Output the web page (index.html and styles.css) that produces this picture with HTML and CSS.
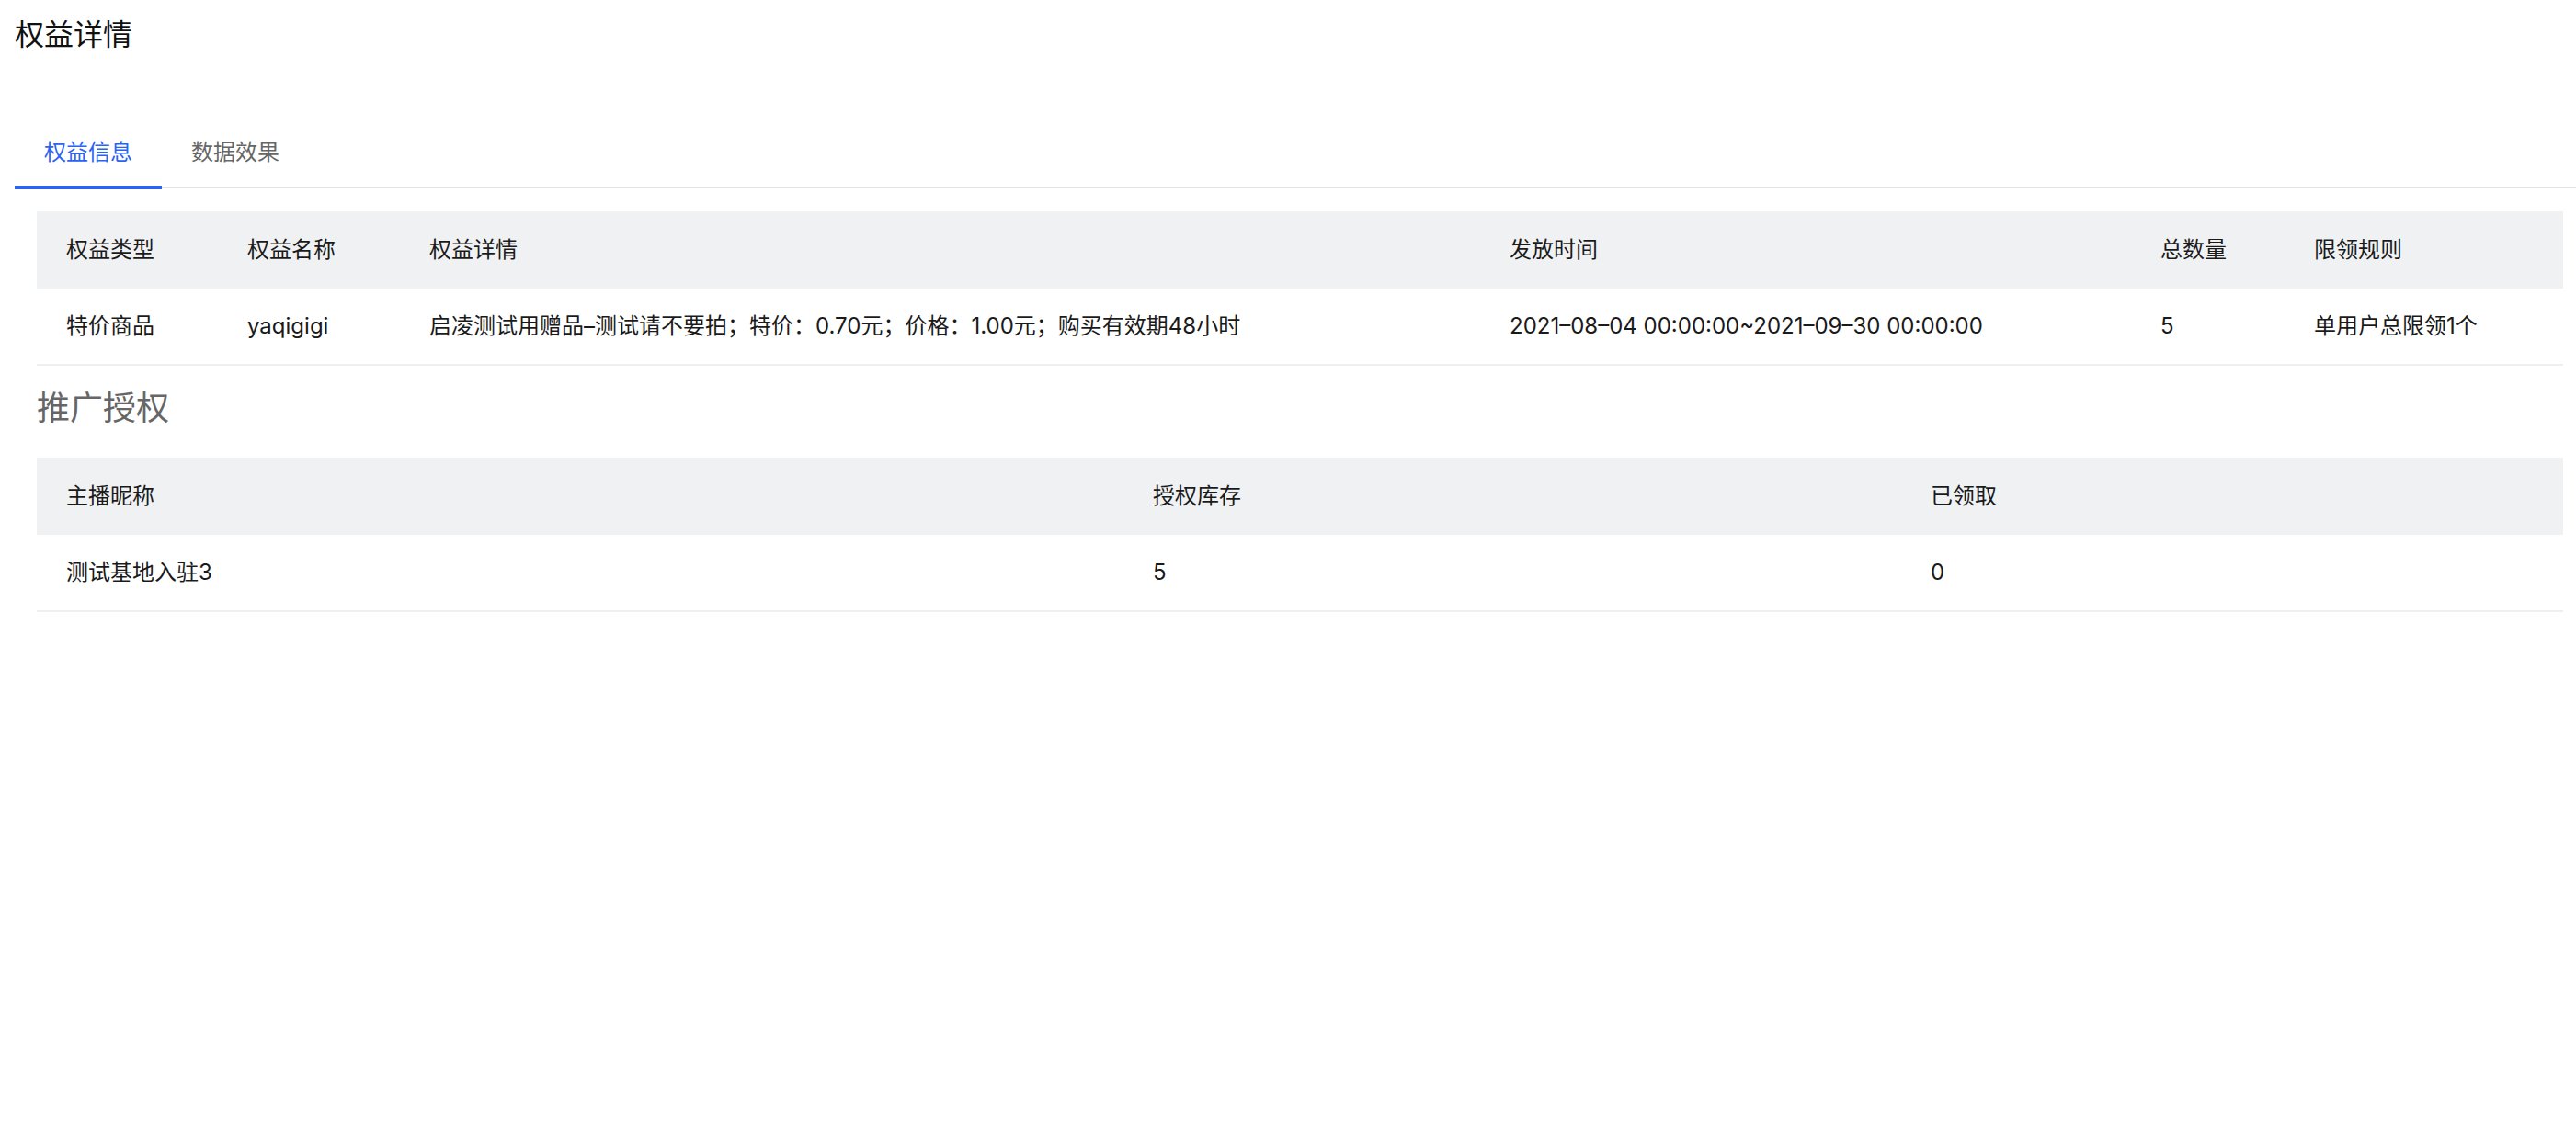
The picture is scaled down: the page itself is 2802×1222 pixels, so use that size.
FILE: index.html
```html
<!DOCTYPE html>
<html lang="zh-CN">
<head>
<meta charset="utf-8">
<title>权益详情</title>
<link rel="stylesheet" href="styles.css">
</head>
<body>
<div class="page">
  <h1 class="pageTitle">权益详情</h1>

  <div class="tabBar">
    <div class="tab tabActive">权益信息</div>
    <div class="tab">数据效果</div>
  </div>

  <div class="content">
    <table class="dataTable">
      <colgroup>
        <col class="colType">
        <col class="colName">
        <col class="colDetail">
        <col class="colTime">
        <col class="colTotal">
        <col class="colRule">
      </colgroup>
      <thead>
        <tr>
          <th>权益类型</th>
          <th>权益名称</th>
          <th>权益详情</th>
          <th>发放时间</th>
          <th>总数量</th>
          <th>限领规则</th>
        </tr>
      </thead>
      <tbody>
        <tr>
          <td>特价商品</td>
          <td>yaqigigi</td>
          <td>启凌测试用赠品–测试请不要拍；特价：0.70元；价格：1.00元；购买有效期48小时</td>
          <td>2021–08–04 00:00:00~2021–09–30 00:00:00</td>
          <td>5</td>
          <td>单用户总限领1个</td>
        </tr>
      </tbody>
    </table>

    <h2 class="sectionTitle">推广授权</h2>

    <table class="dataTable">
      <colgroup>
        <col class="colAnchor">
        <col class="colStock">
        <col class="colTaken">
      </colgroup>
      <thead>
        <tr>
          <th>主播昵称</th>
          <th>授权库存</th>
          <th>已领取</th>
        </tr>
      </thead>
      <tbody>
        <tr>
          <td>测试基地入驻3</td>
          <td>5</td>
          <td>0</td>
        </tr>
      </tbody>
    </table>
  </div>
</div>
</body>
</html>
```

FILE: styles.css
```css
body {
  margin: 0;
  background: #fff;
  font-family: Inter, "Noto Sans CJK SC", sans-serif;
  color: #1a1a1a;
}
.page {
  padding-left: 16px;
}
.pageTitle {
  margin: 16px 0 0;
  font-size: 32px;
  line-height: 44px;
  font-weight: 400;
  color: #111;
}
/* tabs */
.tabBar {
  display: flex;
  margin-top: 69px;
  border-bottom: 2px solid #e4e4e4;
}
.tab {
  position: relative;
  padding: 20px 32px;
  font-size: 24px;
  line-height: 34px;
  color: #666;
}
.tabActive {
  color: #2b63f2;
}
.tabActive::after {
  content: "";
  position: absolute;
  left: 0;
  right: 0;
  bottom: -3px;
  height: 4px;
  background: #2b63f2;
}
/* tables */
.content {
  margin: 25px 14px 0 24px;
}
.dataTable {
  width: 100%;
  table-layout: fixed;
  border-collapse: collapse;
  font-size: 24px;
}
.dataTable th {
  padding: 20px 32px;
  line-height: 44px;
  text-align: left;
  font-weight: 400;
  background: #f0f1f3;
  color: #1a1a1a;
  white-space: nowrap;
}
.dataTable td {
  padding: 19px 32px;
  line-height: 44px;
  border-bottom: 2px solid #eeeff1;
  white-space: nowrap;
}
.colType { width: 197px; }
.colName { width: 198px; }
.colDetail { width: 1175px; }
.colTime { width: 708px; }
.colTotal { width: 167px; }
.colRule { width: 303px; }
.colAnchor { width: 1182px; }
.colStock { width: 846px; }
.colTaken { width: 720px; }
.sectionTitle {
  margin: 21px 0 29px;
  font-size: 36px;
  line-height: 50px;
  font-weight: 400;
  color: #666;
}
```
